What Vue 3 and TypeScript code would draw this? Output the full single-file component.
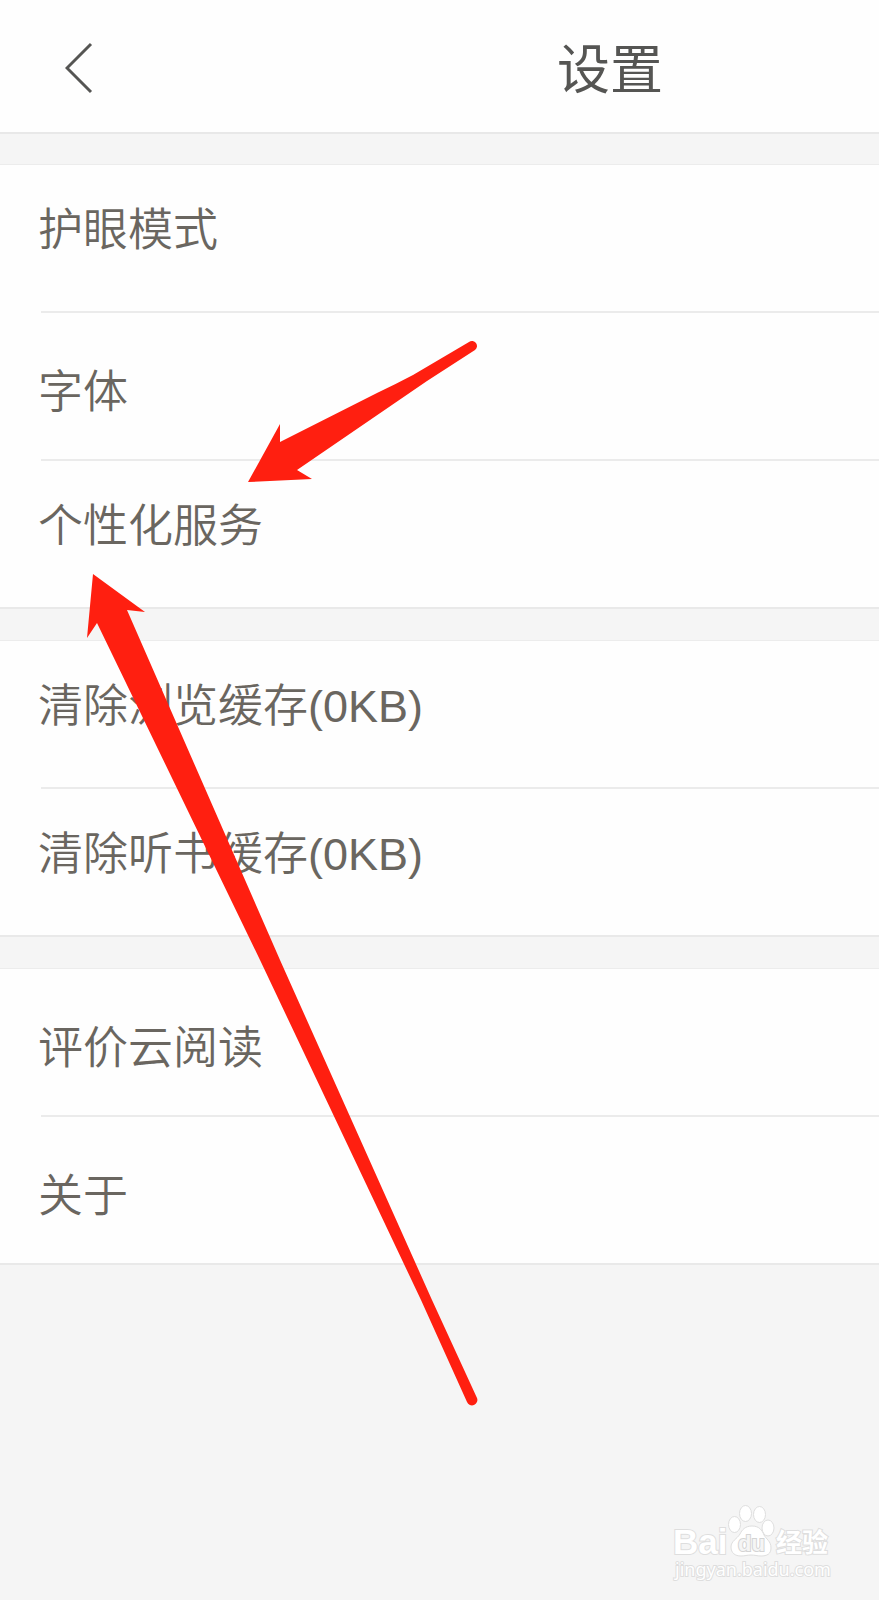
<script setup lang="ts">
interface Item {
  label: string
  align: 'upper' | 'lower'
}

const groups: Item[][] = [
  [
    { label: '护眼模式', align: 'upper' },
    { label: '字体', align: 'lower' },
    { label: '个性化服务', align: 'upper' },
  ],
  [
    { label: '清除浏览缓存(0KB)', align: 'upper' },
    { label: '清除听书缓存(0KB)', align: 'upper' },
  ],
  [
    { label: '评价云阅读', align: 'lower' },
    { label: '关于', align: 'lower' },
  ],
]
</script>

<template>
  <div class="page">
    <header class="bar">
      <button class="back" type="button" aria-label="返回">
        <svg width="28" height="52" viewBox="0 0 28 52" aria-hidden="true">
          <path d="M26 2 2 26 26 50" fill="none" stroke="#555553" stroke-width="3" />
        </svg>
      </button>
      <h1 class="title">设置</h1>
    </header>

    <main class="groups">
      <ul v-for="(group, g) in groups" :key="g" class="group">
        <li v-for="item in group" :key="item.label" class="item">
          <button type="button" class="row" :class="item.align">{{ item.label }}</button>
        </li>
      </ul>
    </main>

    <svg class="arrows" width="500" height="1420" viewBox="0 0 500 1420" aria-hidden="true">
      <path
        fill="#ff1f10"
        d="M248 482 280 424 280 442 377 393 Q396 384 413 375 L469 342 A5 5 0 0 1 475 350 L427 381 297 470 312 479Z"
      />
      <path
        fill="#ff1f10"
        d="M93 574 145 612 127 610 280 960 432 1300 477 1398 A5 5 0 0 1 467 1402 L421 1300 260 960 97 623 87 638Z"
      />
    </svg>

    <footer class="mark">
      <svg width="164" height="86" viewBox="0 0 164 86" role="img" aria-label="Baidu 经验 jingyan.baidu.com">
        <g fill="#fff" stroke="#dedede" stroke-width="1">
          <ellipse cx="62.5" cy="24.5" rx="6" ry="8" />
          <ellipse cx="73.5" cy="13.5" rx="6" ry="8" />
          <ellipse cx="87.5" cy="14.5" rx="6" ry="8" />
          <ellipse cx="96" cy="28" rx="6" ry="8" />
          <path d="M80 26C87 26 90 30 92 35 94 39 99 41 99 48 99 54 95 56 89 56 85 56 83 55 79 55 75 55 73 56 69 56 63 56 59 53 59 47 59 41 65 39 68 34 70 30 73 26 80 26Z" />
        </g>
        <text class="word latin" x="1" y="54">Bai</text>
        <text class="du" x="66" y="51">du</text>
        <text class="word cjk" x="104" y="52">经验</text>
        <text class="word url" x="3" y="76">jingyan.baidu.com</text>
      </svg>
    </footer>
  </div>
</template>

<style>
body {
  background: #f5f5f5;
}
</style>

<style scoped>
.page {
  position: relative;
  display: flex;
  flex-direction: column;
  min-height: 100vh;
  box-sizing: border-box;
  overflow: hidden;
  background: #f5f5f5;
  font-family: "Liberation Sans", "Noto Sans CJK SC", sans-serif;
}

.bar {
  display: grid;
  grid-template-columns: 341px 1fr;
  align-items: center;
  height: 132px;
  border-bottom: 2px solid #e8e8e8;
  background: #fefefe;
}

.back {
  justify-self: start;
  margin-left: 65px;
  margin-top: 4px;
  padding: 0;
  border: 0;
  background: none;
}

.back svg {
  display: block;
}

.title {
  margin: 10px 0 0;
  color: #555553;
  font-size: 53px;
  font-weight: 400;
  line-height: 80px;
  text-align: center;
}

.groups {
  display: flex;
  flex-direction: column;
  gap: 31px;
  margin-top: 30px;
}

.group {
  margin: 0;
  padding: 0;
  list-style: none;
  border-top: 1px solid #ececec;
  border-bottom: 2px solid #e9e9e9;
  background: #fefefe;
}

.item {
  margin-left: 41px;
}

.item + .item {
  border-top: 2px solid #ebebeb;
}

.row {
  display: block;
  width: 100%;
  height: 146px;
  margin-left: -3px;
  border: 0;
  background: none;
  color: #6a6660;
  font-family: inherit;
  font-size: 45px;
  font-weight: 350;
  line-height: 66px;
  text-align: left;
}

.upper {
  padding: 33px 0 47px;
}

.lower {
  padding: 47px 0 33px;
}

.arrows {
  position: absolute;
  top: 0;
  left: 0;
}

.mark {
  display: flex;
  justify-content: flex-end;
  margin-top: auto;
  padding: 0 43px 14px 0;
}

.word,
.du {
  fill: #fff;
  stroke: #dedede;
  stroke-width: 2px;
  paint-order: stroke;
}

.latin {
  font: 700 35px "Liberation Sans", sans-serif;
}

.du {
  fill: #f5f5f5;
  stroke: #d4d4d4;
  font: 700 22px "Liberation Sans", sans-serif;
}

.cjk {
  font: 700 26px "Noto Sans CJK SC", sans-serif;
}

.url {
  font: 400 18px "Noto Sans", sans-serif;
}
</style>
